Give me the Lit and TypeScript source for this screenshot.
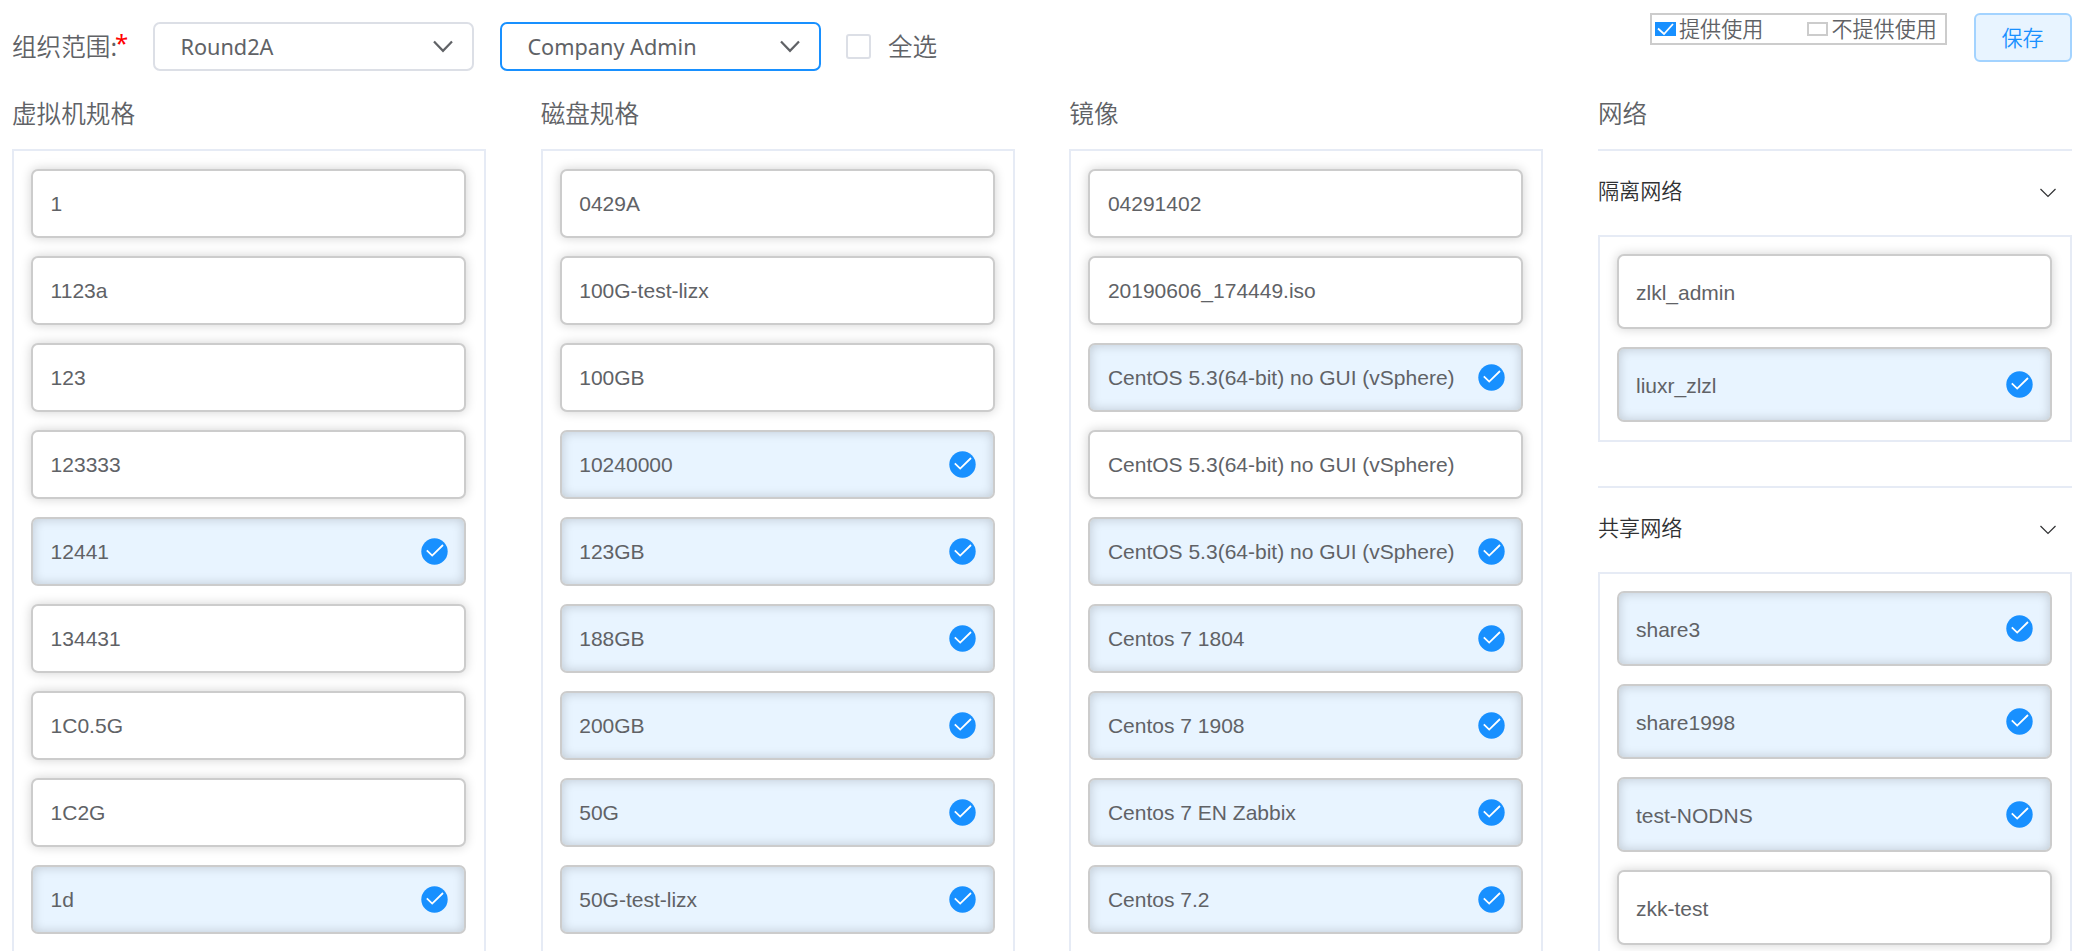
import { LitElement, html, css } from "lit";
import { customElement, property } from "lit/decorators.js";
import { classMap } from "lit/directives/class-map.js";

type Item = [string, boolean];

const VM_SPECS: Item[] = [
  ["1", false], ["1123a", false], ["123", false], ["123333", false], ["12441", true],
  ["134431", false], ["1C0.5G", false], ["1C2G", false], ["1d", true],
];
const DISK_SPECS: Item[] = [
  ["0429A", false], ["100G-test-lizx", false], ["100GB", false], ["10240000", true], ["123GB", true],
  ["188GB", true], ["200GB", true], ["50G", true], ["50G-test-lizx", true],
];
const IMAGES: Item[] = [
  ["04291402", false], ["20190606_174449.iso", false],
  ["CentOS 5.3(64-bit) no GUI (vSphere)", true], ["CentOS 5.3(64-bit) no GUI (vSphere)", false],
  ["CentOS 5.3(64-bit) no GUI (vSphere)", true], ["Centos 7 1804", true], ["Centos 7 1908", true],
  ["Centos 7 EN Zabbix", true], ["Centos 7.2", true],
];
const ISOLATED: Item[] = [["zlkl_admin", false], ["liuxr_zlzl", true]];
const SHARED: Item[] = [["share3", true], ["share1998", true], ["test-NODNS", true], ["zkk-test", false]];

@customElement("option-card")
class OptionCard extends LitElement {
  @property() label = "";
  @property({ type: Boolean }) checked = false;
  @property({ type: Boolean }) tall = false;

  static styles = css`
    :host { display: block; }
    .card {
      box-sizing: border-box; height: 69px; padding: 0 16.5px 0 17.6px;
      display: flex; align-items: center; justify-content: space-between;
      border: 2px solid #ccc; border-radius: 7px; background: #fff;
      box-shadow: 0 0 11px rgba(0, 0, 0, 0.18);
      font: 21px "Liberation Sans", Arial, sans-serif; color: #606266; white-space: nowrap;
    }
    .tall { height: 75px; padding-left: 17px; }
    .checked { background: #e8f4ff; box-shadow: inset 0 0 11px rgba(0, 0, 0, 0.18); }
    .label { padding-top: 1px; }
    .tall .label { padding-top: 2px; }
    .tick { display: block; width: 27px; height: 27px; }
  `;

  render() {
    return html`<div class=${classMap({ card: true, checked: this.checked, tall: this.tall })}>
      <span class="label">${this.label}</span>
      ${this.checked
        ? html`<svg class="tick" viewBox="0 0 27 27">
            <circle cx="13.5" cy="13.5" r="13.2" fill="#1890ff" />
            <path d="M5.8 12.4 L11.2 17.6 L22 7" fill="none" stroke="#fff" stroke-width="1.8" />
          </svg>`
        : ""}
    </div>`;
  }
}

@customElement("select-box")
class SelectBox extends LitElement {
  @property() value = "";
  @property({ type: Boolean }) active = false;

  static styles = css`
    :host { display: block; }
    .box {
      box-sizing: border-box; width: 321px; height: 49px; padding: 0 18.6px 0 25.4px;
      display: flex; align-items: center; justify-content: space-between;
      border: 2px solid #dcdfe6; border-radius: 7px;
      font: 21.7px "Noto Sans", "Open Sans", sans-serif; color: #606266;
    }
    .active { border-color: #1890ff; }
    .arrow { width: 20px; height: 13px; }
  `;

  render() {
    return html`<div class=${classMap({ box: true, active: this.active })}>
      <span>${this.value}</span>
      <svg class="arrow" viewBox="0 0 20 13">
        <path d="M1 1.5 L10 10.8 L19 1.5" fill="none" stroke="#606266" stroke-width="2.2" />
      </svg>
    </div>`;
  }
}

@customElement("app-root")
class AppRoot extends LitElement {
  static styles = css`
    :host {
      display: block; height: 951px; overflow: hidden; background: #fff; color: #606266;
      font-family: "Noto Sans CJK SC", sans-serif;
    }
    .topbar { display: flex; height: 84px; padding: 0 10px 0 12px; box-sizing: border-box; }
    .scope { display: flex; align-items: center; height: 49px; margin-top: 22px; }
    .field-label { display: flex; width: 141px; font-size: 24.6px; line-height: 46px; height: 49px; white-space: nowrap; font-weight: 350; }
    .required { color: #f00; font: 400 24px/42px "Noto Sans", sans-serif; margin-left: -2px; }
    .second { margin-left: 26px; }
    .checkbox { box-sizing: border-box; width: 25px; height: 25px; margin-left: 25px; border: 2px solid #dcdfe6; border-radius: 3px; }
    .all { margin-left: 17px; font-size: 24.6px; line-height: 46px; height: 49px; font-weight: 350; }
    .actions { display: flex; margin: 13px 0 0 auto; font-size: 21.1px; font-weight: 350; }
    .legend {
      box-sizing: border-box; width: 297px; height: 32px; border: 2px solid #ccc; padding-left: 3px;
      display: flex; align-items: center; line-height: 28px;
    }
    .legend-text { margin-top: -3px; }
    .mark { box-sizing: border-box; width: 21px; height: 14px; margin: 0 3px 0 0; }
    .mark-on { background: #1890ff; }
    .mark-off { border: 2px solid #ccc; margin-left: 44px; }
    .mark svg { display: block; width: 21px; height: 14px; }
    .save {
      box-sizing: border-box; width: 98px; height: 49px; margin-left: 27px; padding: 0 1px 2px 0;
      border: 2px solid #a3d3ff; border-radius: 6px; background: #e8f4ff; color: #1890ff;
      font: inherit;
    }
    .columns { display: grid; grid-template-columns: repeat(4, 474px); column-gap: 54.67px; padding: 0 12px; }
    .title { height: 65px; line-height: 56px; font-size: 24.6px; font-weight: 350; }
    .panel { box-sizing: border-box; border: 2px solid #e6ebf5; padding: 18px 18px 17px 17px; height: 900px; display: flex; flex-direction: column; gap: 18px; }
    .group { border-top: 2px solid #e6ebf5; }
    .group-head {
      height: 84px; box-sizing: border-box; padding: 0 15px 6px 0; display: flex; align-items: center; justify-content: space-between;
      font-size: 21.1px; color: #303133; font-weight: 350;
    }
    .group-head svg { width: 18px; height: 10px; margin-top: 5px; }
    .net { padding: 17px 18px 18px 17px; }
    .isolated { height: 207px; margin-bottom: 44px; }
  `;

  private cards(items: Item[], tall = false) {
    return items.map(([label, checked]) => html`<option-card .label=${label} .checked=${checked} .tall=${tall}></option-card>`);
  }

  private column(title: string, items: Item[]) {
    return html`<section>
      <div class="title">${title}</div>
      <div class="panel">${this.cards(items)}</div>
    </section>`;
  }

  private groupHead(title: string) {
    return html`<div class="group-head">
      <span>${title}</span>
      <svg viewBox="0 0 18 10"><path d="M1.5 1 L9 8.5 L16.5 1" fill="none" stroke="#303133" stroke-width="1.2" /></svg>
    </div>`;
  }

  render() {
    return html`
      <header class="topbar">
        <div class="scope">
          <div class="field-label">组织范围:<span class="required">*</span></div>
          <select-box value="Round2A"></select-box>
          <select-box class="second" value="Company Admin" active></select-box>
          <span class="checkbox"></span>
          <span class="all">全选</span>
        </div>
        <div class="actions">
          <div class="legend">
            <span class="mark mark-on"><svg viewBox="0 0 21 14"><path d="M3 6.5 L9 12 L18 2" fill="none" stroke="#fff" stroke-width="1.8" /></svg></span>
            <span class="legend-text">提供使用</span>
            <span class="mark mark-off"></span>
            <span class="legend-text">不提供使用</span>
          </div>
          <button class="save">保存</button>
        </div>
      </header>
      <main class="columns">
        ${this.column("虚拟机规格", VM_SPECS)}
        ${this.column("磁盘规格", DISK_SPECS)}
        ${this.column("镜像", IMAGES)}
        <section>
          <div class="title">网络</div>
          <div class="group">
            ${this.groupHead("隔离网络")}
            <div class="panel net isolated">${this.cards(ISOLATED, true)}</div>
          </div>
          <div class="group">
            ${this.groupHead("共享网络")}
            <div class="panel net">${this.cards(SHARED, true)}</div>
          </div>
        </section>
      </main>
    `;
  }
}
